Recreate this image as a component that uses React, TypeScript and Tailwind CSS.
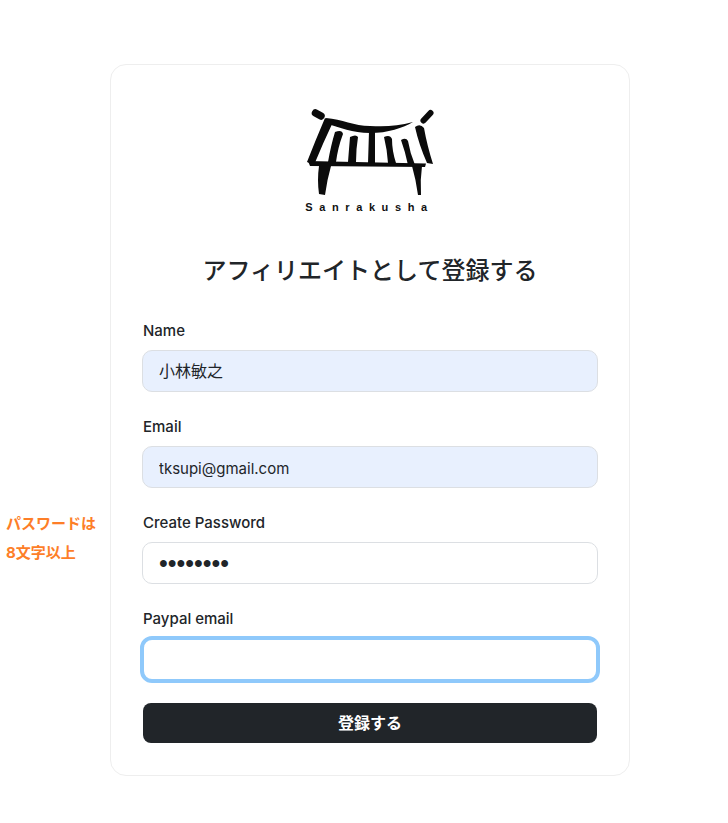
const sans = "font-['Inter','Noto_Sans_CJK_JP',sans-serif]";

function Logo() {
  return (
    <svg width="160" height="100" viewBox="0 0 160 100" className="block" fill="#0b0b0b" aria-hidden="true">
      <g stroke="#0b0b0b" strokeLinecap="round" fill="none">
        <path d="M25.5 18 L31 21" strokeWidth="7.5" />
        <path d="M140.5 18 L133.5 25.5" strokeWidth="6" />
      </g>
      <path d="M36 23 C52 24 64 31 80 31 C96 32 108 31 123 27 C113 33 98 38 80 38 C62 38 50 32 37 29 Z" />
      <path d="M35 23 L43 27 Q33 48 24 70 L17 67 Q26 44 35 23 Z" />
      <path d="M125 32 Q130 28 134 33 Q137 50 143 69 L137 68 Q129 50 125 32 Z" />
      <path d="M45 37 Q52 34 53 39 Q48 52 46 67 L38 67 Q41 50 45 37 Z" />
      <path d="M60 42 Q66 39 68 42 Q66 54 66 67 L58 67 Q59 54 60 42 Z" />
      <path d="M79 36 L85 36 L85 68 L78 68 Z" />
      <path d="M94 42 Q100 39 102 44 Q102 56 106 68 L98 68 Q97 54 94 42 Z" />
      <path d="M111 45 Q116 42 118 46 Q120 58 125 70 L118 70 Q115 56 111 45 Z" />
      <path d="M18 66 L136 68.5 L135 72 L20 71 Z" />
      <path d="M29 71 L41 71 Q37 85 35 100 L29 99 Q27 85 29 71 Z" />
      <path d="M122 71 L132 71 Q130 85 131 100 L128 100 Q126 85 122 71 Z" />
    </svg>
  );
}

function Field({
  label,
  value,
  type,
  className,
}: {
  label: string;
  value: string;
  type: string;
  className: string;
}) {
  return (
    <div className="flex flex-col">
      <label className="text-[15px] leading-[22px] font-medium text-[#212529] mb-2 ml-[1px]">{label}</label>
      <input type={type} defaultValue={value} readOnly className={className} />
    </div>
  );
}

export default function App() {
  const base =
    "w-full h-[42px] rounded-[10px] border border-[#dcdfe3] px-4 text-[#212529] outline-none";
  return (
    <div className={`relative w-[728px] h-[823px] bg-white overflow-hidden pt-16 pl-[110px] ${sans}`}>
      <div className="absolute left-[6px] top-[509px] text-[15px] font-bold leading-[29px] text-[#fd7e28]">
        <div>パスワードは</div>
        <div>8文字以上</div>
      </div>
      <div className="w-[520px] h-[712px] rounded-[16px] border border-[#eeeeee] bg-white pt-[30px] px-[31px]">
        <div className="flex flex-col items-center">
          <Logo />
          <div className="mt-[5px] ml-[-1px] h-[14px] text-[11px] leading-[14px] font-bold tracking-[6.6px] text-[#111111] font-['Liberation_Sans',sans-serif]">
            Sanrakusha
          </div>
        </div>
        <h1 className="mt-[39px] text-center text-[24px] leading-[36px] font-medium text-[#212529]">
          アフィリエイトとして登録する
        </h1>
        <div className="mt-[31px] flex flex-col gap-[24px]">
          <Field label="Name" value="小林敏之" type="text" className={`${base} bg-[#e8f0fe] text-[16px] pb-[2px]`} />
          <Field label="Email" value="tksupi@gmail.com" type="text" className={`${base} bg-[#e8f0fe] text-[15px] pt-[2px]`} />
          <Field label="Create Password" value="password" type="password" className={`${base} bg-white text-[25px] font-['Liberation_Sans',sans-serif]`} />
          <div className="flex flex-col">
            <label className="text-[15px] leading-[22px] font-medium text-[#212529] mb-2 ml-[1px]">Paypal email</label>
            <input
              type="text"
              readOnly
              className="w-[460px] -ml-[2px] h-[47px] -mt-[2px] rounded-[12px] border-[4px] border-[#8fc9fb] bg-white px-4 outline-none"
            />
          </div>
        </div>
        <button className="mt-[20px] w-[454px] ml-[1px] block h-10 rounded-[8px] bg-[#212529] text-white text-[16px] font-bold">
          登録する
        </button>
      </div>
    </div>
  );
}
